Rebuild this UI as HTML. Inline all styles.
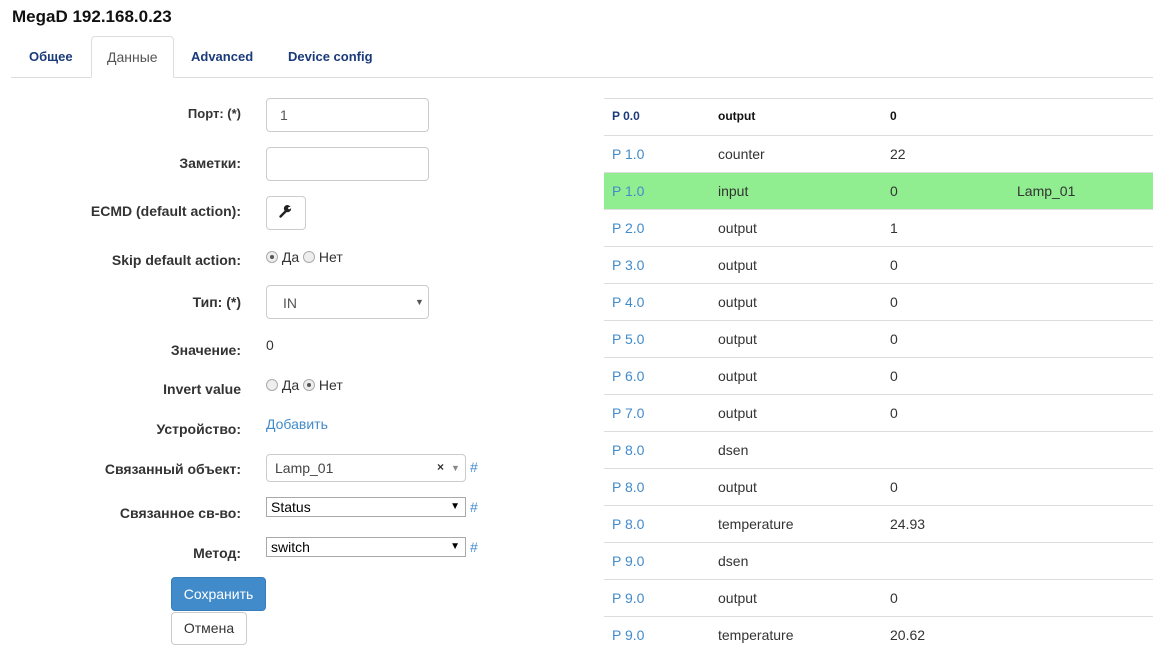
<!DOCTYPE html>
<html><head><meta charset="utf-8"><style>
*{box-sizing:border-box;margin:0;padding:0}
body{width:1153px;height:651px;overflow:hidden;background:#fff;font-family:"Liberation Sans",Arial,sans-serif;font-size:14px;color:#333;position:relative}
.a{position:absolute;white-space:nowrap}
.lbl{position:absolute;right:912px;font-weight:bold;color:#333;white-space:nowrap}
.inp{position:absolute;border:1px solid #ccc;border-radius:4px;background:#fff}
.sel{position:absolute;border:1px solid #a9a9a9;background:#fff;height:20px;font-size:14px;padding:1px 4px;color:#000}
.sel:after{content:"▼";position:absolute;right:5px;top:3px;font-size:10px}
.hash{position:absolute;color:#428bca}
.radio{display:inline-block;width:12px;height:12px;border:1px solid #aaa;border-radius:50%;background:#eee;vertical-align:-1px;position:relative}
.radio.on:after{content:"";position:absolute;left:3px;top:3px;width:4px;height:4px;border-radius:50%;background:#555}
.row{position:absolute;left:604px;width:549px;height:37px;border-top:1px solid #ddd}
.row span{position:absolute;top:10px}
.c1{left:8px;color:#428bca}.c2{left:114px}.c3{left:286px}.c4{left:413px}
</style></head><body>
<div class="a" style="left:12px;top:7px;font-size:17px;font-weight:bold;color:#111">MegaD 192.168.0.23</div>
<div class="a" style="left:11px;top:77px;width:1142px;border-top:1px solid #ddd"></div>
<div class="a" style="left:91px;top:36px;width:83px;height:42px;border:1px solid #ddd;border-bottom-color:#fff;border-radius:4px 4px 0 0;background:#fff"></div>
<div class="a" style="left:29px;top:49px;font-weight:bold;font-size:13px;color:#1a3a7a">Общее</div>
<div class="a" style="left:107px;top:49px;color:#555">Данные</div>
<div class="a" style="left:191px;top:49px;font-weight:bold;font-size:13px;color:#1a3a7a">Advanced</div>
<div class="a" style="left:288px;top:49px;font-weight:bold;font-size:13px;color:#1a3a7a">Device config</div>

<div class="lbl" style="top:106px;font-size:13px">Порт: (*)</div>
<div class="inp" style="left:266px;top:98px;width:163px;height:34px"></div>
<div class="a" style="left:280px;top:107px;color:#555">1</div>
<div class="lbl" style="top:155px">Заметки:</div>
<div class="inp" style="left:266px;top:147px;width:163px;height:34px"></div>
<div class="lbl" style="top:203px">ECMD (default action):</div>
<div class="inp" style="left:266px;top:196px;width:40px;height:34px"></div>
<svg class="a" style="left:278px;top:204px" width="15" height="15" viewBox="0 0 15 15"><path d="M2.5 12.5 L8 7" stroke="#222" stroke-width="2.4" stroke-linecap="round"/><path d="M7.5 7.5 A3.5 3.5 0 1 1 12.5 3 L10.5 3 L10 5 L12 5.3 L13 4 A3.5 3.5 0 0 1 7.5 7.5Z" fill="#222"/></svg>
<div class="lbl" style="top:252px">Skip default action:</div>
<div class="a" style="left:266px;top:249px"><span class="radio on"></span> Да <span class="radio"></span> Нет</div>
<div class="lbl" style="top:294px">Тип: (*)</div>
<div class="inp" style="left:266px;top:285px;width:163px;height:34px"></div>
<div class="a" style="left:283px;top:295px;color:#555">IN</div>
<div class="a" style="left:415px;top:297px;font-size:9px;color:#555">▼</div>
<div class="lbl" style="top:342px">Значение:</div>
<div class="a" style="left:266px;top:337px">0</div>
<div class="lbl" style="top:381px">Invert value</div>
<div class="a" style="left:266px;top:377px"><span class="radio"></span> Да <span class="radio on"></span> Нет</div>
<div class="lbl" style="top:421px">Устройство:</div>
<div class="a" style="left:266px;top:416px;color:#428bca">Добавить</div>
<div class="lbl" style="top:461px">Связанный объект:</div>
<div class="inp" style="left:266px;top:454px;width:200px;height:28px"></div>
<div class="a" style="left:275px;top:460px;color:#444">Lamp_01</div>
<div class="a" style="left:437px;top:460px;font-size:12px;font-weight:bold">×</div>
<div class="a" style="left:451px;top:463px;font-size:9px;color:#888">▼</div>
<div class="hash" style="left:470px;top:459px">#</div>
<div class="lbl" style="top:505px">Связанное св-во:</div>
<div class="sel" style="left:266px;top:497px;width:200px">Status</div>
<div class="hash" style="left:470px;top:499px">#</div>
<div class="lbl" style="top:545px">Метод:</div>
<div class="sel" style="left:266px;top:537px;width:200px">switch</div>
<div class="hash" style="left:470px;top:539px">#</div>
<div class="a" style="left:171px;top:577px;width:95px;height:34px;background:#428bca;border:1px solid #357ebd;border-radius:4px;color:#fff;text-align:center;line-height:32px">Сохранить</div>
<div class="a" style="left:171px;top:612px;width:76px;height:33px;border:1px solid #ccc;border-radius:4px;text-align:center;line-height:31px">Отмена</div>

<div class="row" style="top:98px;font-weight:bold;font-size:12px;color:#111"><span class="c1" style="color:#1a3a7a">P 0.0</span><span class="c2">output</span><span class="c3">0</span></div>
<div class="row" style="top:135px"><span class="c1">P 1.0</span><span class="c2">counter</span><span class="c3">22</span></div>
<div class="row" style="top:172px;background:#90ee90"><span class="c1">P 1.0</span><span class="c2">input</span><span class="c3">0</span><span class="c4">Lamp_01</span></div>
<div class="row" style="top:209px"><span class="c1">P 2.0</span><span class="c2">output</span><span class="c3">1</span></div>
<div class="row" style="top:246px"><span class="c1">P 3.0</span><span class="c2">output</span><span class="c3">0</span></div>
<div class="row" style="top:283px"><span class="c1">P 4.0</span><span class="c2">output</span><span class="c3">0</span></div>
<div class="row" style="top:320px"><span class="c1">P 5.0</span><span class="c2">output</span><span class="c3">0</span></div>
<div class="row" style="top:357px"><span class="c1">P 6.0</span><span class="c2">output</span><span class="c3">0</span></div>
<div class="row" style="top:394px"><span class="c1">P 7.0</span><span class="c2">output</span><span class="c3">0</span></div>
<div class="row" style="top:431px"><span class="c1">P 8.0</span><span class="c2">dsen</span></div>
<div class="row" style="top:468px"><span class="c1">P 8.0</span><span class="c2">output</span><span class="c3">0</span></div>
<div class="row" style="top:505px"><span class="c1">P 8.0</span><span class="c2">temperature</span><span class="c3">24.93</span></div>
<div class="row" style="top:542px"><span class="c1">P 9.0</span><span class="c2">dsen</span></div>
<div class="row" style="top:579px"><span class="c1">P 9.0</span><span class="c2">output</span><span class="c3">0</span></div>
<div class="row" style="top:616px"><span class="c1">P 9.0</span><span class="c2">temperature</span><span class="c3">20.62</span></div>
</body></html>
